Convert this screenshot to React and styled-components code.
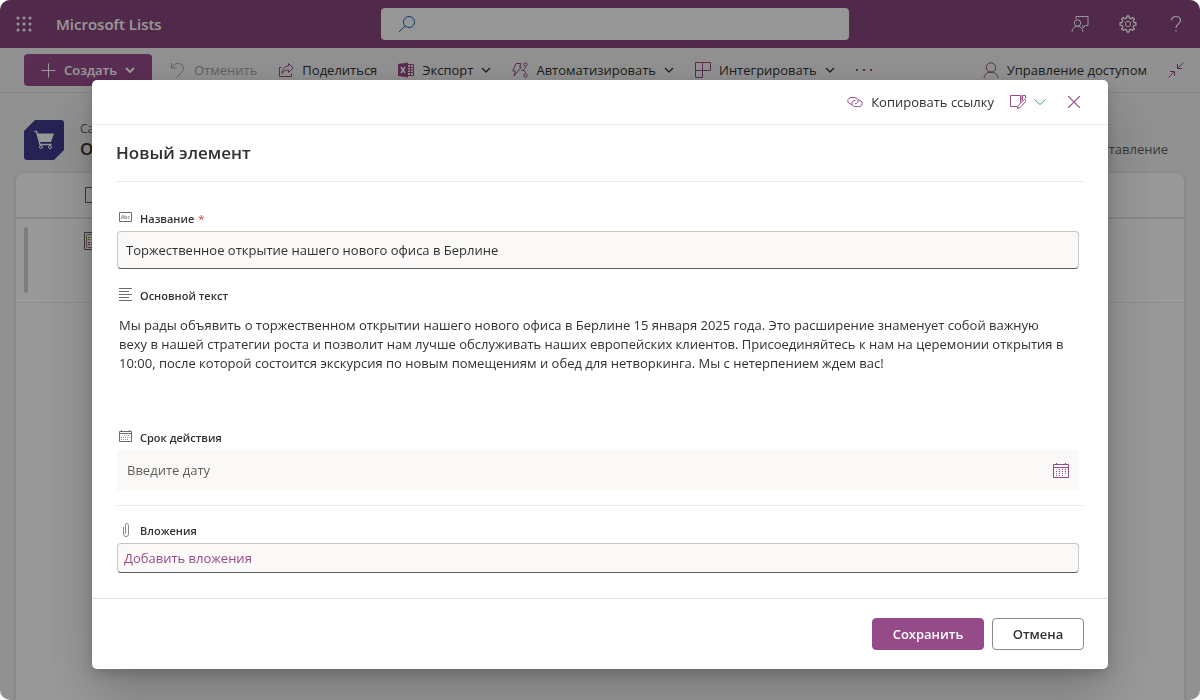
import React, { useState } from 'react';
import styled, { createGlobalStyle, css } from 'styled-components';

const purple = '#964b89';
const ink = '#323130';

const GlobalStyle = createGlobalStyle`
  * {
    box-sizing: border-box;
  }

  body {
    margin: 0;
    background: #fff;
    color: ${ink};
    font-family: 'Open Sans', 'Noto Sans', sans-serif;
    font-size: 13px;
  }

  button, input, textarea {
    font: inherit;
    color: inherit;
  }

  svg {
    display: block;
    flex: none;
    fill: none;
    stroke: currentColor;
  }
`;

const Page = styled.div`
  display: flex;
  flex-direction: column;
  min-height: 100vh;
  overflow: hidden;
  border-radius: 10px;
  background: #f2f2f2;
`;

const Header = styled.header`
  display: grid;
  grid-template-columns: 381fr 468fr 351fr;
  align-items: center;
  height: 48px;
  background: #87457c;
  color: #fff;
`;

const Brand = styled.div`
  display: flex;
  align-items: center;
  gap: 8px;
  font-size: 15px;
  font-weight: 600;
`;

const HeaderButton = styled.button`
  display: flex;
  align-items: center;
  justify-content: center;
  width: 48px;
  height: 48px;
  padding: 0;
  border: 0;
  background: none;
`;

const HeaderActions = styled.div`
  display: flex;
  justify-content: flex-end;
`;

const SearchBox = styled.label`
  display: flex;
  align-items: center;
  gap: 12px;
  height: 32px;
  padding: 0 17px;
  border-radius: 4px;
  background: #fafafa;
  color: #106ebe;
`;

const SearchInput = styled.input`
  flex: 1;
  min-width: 0;
  border: 0;
  outline: 0;
  background: none;
  color: ${ink};
`;

const CommandBar = styled.nav`
  display: flex;
  align-items: center;
  gap: 8px;
  height: 45px;
  padding: 0 16px 0 24px;
  border-bottom: 1px solid #e1dfdd;
`;

const CreateButton = styled.button`
  display: flex;
  align-items: center;
  gap: 8px;
  width: 128px;
  height: 32px;
  padding: 0 16px;
  border: 0;
  border-radius: 4px;
  background: ${purple};
  color: #fff;
  font-weight: 600;
`;

const Commands = styled.div`
  display: flex;
  flex: 1;
  gap: 1px;
`;

const Command = styled.button`
  display: flex;
  align-items: center;
  gap: 8px;
  height: 32px;
  padding: 0 10px;
  border: 0;
  background: none;
  white-space: nowrap;
  color: ${p => (p.disabled ? '#a19f9d' : ink)};

  svg:first-child {
    color: ${p => (p.disabled ? '#a19f9d' : purple)};
  }
`;

const CollapseButton = styled(Command)`
  padding: 0 0 0 3px;
`;

const ListHeading = styled.div`
  display: flex;
  align-items: center;
  gap: 16px;
  height: 80px;
  padding: 14px 32px 0 24px;
`;

const ListNames = styled.div`
  flex: 1;
`;

const SiteName = styled.div`
  font-size: 12px;
  line-height: 18px;
  color: #605e5c;
`;

const ListName = styled.h1`
  margin: 0;
  font-size: 17px;
  font-weight: 600;
  line-height: 22px;
`;

const ViewButton = styled.button`
  margin-top: 18px;
  padding: 0;
  border: 0;
  background: none;
  color: #605e5c;
`;

const ListPanel = styled.main`
  flex: 1;
  margin: 0 16px;
  border-radius: 8px 8px 0 0;
  background: #fff;
  box-shadow: 0 1px 4px rgba(0, 0, 0, 0.16);
`;

const ListHead = styled.div`
  display: flex;
  align-items: center;
  height: 46px;
  padding-left: 68px;
  border-bottom: 2px solid #e8e6e4;
`;

const ListItem = styled.div`
  display: flex;
  gap: 56px;
  height: 84px;
  padding: 8px;
  border-bottom: 1px solid #edebe9;
`;

const ItemMark = styled.div`
  width: 4px;
  height: 66px;
  border-radius: 2px;
  background: #d2d0ce;
`;

const ItemThumb = styled.div`
  padding-top: 5px;
`;

const Overlay = styled.div`
  position: fixed;
  inset: 0;
  display: flex;
  align-items: flex-start;
  justify-content: center;
  padding: 80px 92px 0;
  overflow: hidden;
  border-radius: 10px;
  background: rgba(0, 0, 0, 0.4);
`;

const Dialog = styled.form`
  flex: 1;
  border-radius: 5px;
  background: #fff;
  box-shadow: 0 26px 58px rgba(0, 0, 0, 0.22), 0 5px 14px rgba(0, 0, 0, 0.18);
`;

const DialogBar = styled.div`
  display: flex;
  align-items: center;
  justify-content: flex-end;
  height: 45px;
  padding: 0 28px;
  border-bottom: 1px solid #edebe9;
`;

const BarButton = styled.button`
  display: flex;
  align-items: center;
  gap: 8px;
  margin-left: ${p => (p.$spaced ? 22 : 16)}px;
  padding: 0;
  border: 0;
  background: none;

  svg {
    color: ${purple};
  }
`;

const DialogBody = styled.div`
  padding: 0 24px 25px;
`;

const DialogTitle = styled.h2`
  margin: 0;
  border-bottom: 1px solid #edebe9;
  font-size: 17px;
  font-weight: 600;
  line-height: 56px;
`;

const Fields = styled.div`
  display: flex;
  flex-direction: column;
  gap: 16px;
  padding: 26px 5px 15px 1px;
`;

const AttachmentArea = styled.div`
  padding: 14px 5px 0 1px;
  border-top: 1px solid #edebe9;
`;

const Field = styled.div`
  display: flex;
  flex-direction: column;
  gap: 3px;
`;

const FieldLabel = styled.label`
  display: flex;
  align-items: center;
  gap: 7px;
  height: 20px;
  padding-left: 2px;
  font-size: 11px;
  font-weight: 600;

  svg {
    color: #6e6c6a;
  }
`;

const Required = styled.span`
  margin-left: -3px;
  font-weight: 400;
  color: #d13438;
`;

const boxed = css`
  border: 1px solid #c8c6c4;
  border-bottom-color: #605e5c;
  border-radius: 4px;
  background: #faf9f8;
`;

const TextInput = styled.input`
  ${boxed}
  width: 100%;
  height: 38px;
  padding: 0 8px;
  outline: 0;
`;

const TextArea = styled.textarea`
  display: block;
  width: 100%;
  height: 103px;
  padding: 8px 10px 8px 2px;
  border: 0;
  outline: 0;
  resize: none;
  overflow: hidden;
  background: none;
  line-height: 19px;
`;

const DateBox = styled.div`
  display: flex;
  align-items: center;
  height: 40px;
  padding: 0 10px;
  background: #faf9f8;
`;

const DateInput = styled.input`
  flex: 1;
  min-width: 0;
  padding: 0;
  border: 0;
  outline: 0;
  background: none;

  &::placeholder {
    color: #605e5c;
    opacity: 1;
  }
`;

const IconButton = styled.button`
  padding: 0;
  border: 0;
  background: none;
  color: ${purple};
`;

const AttachButton = styled.button`
  ${boxed}
  width: 100%;
  height: 30px;
  padding: 0 6px;
  text-align: left;
  color: ${purple};
`;

const DialogFooter = styled.footer`
  display: flex;
  justify-content: flex-end;
  gap: 8px;
  padding: 19px 24px;
  border-top: 1px solid #e1dfdd;
`;

const FooterButton = styled.button`
  min-width: ${p => (p.$primary ? 112 : 92)}px;
  height: 32px;
  padding: 0 16px;
  border: 1px solid ${p => (p.$primary ? purple : '#8a8886')};
  border-radius: 4px;
  background: ${p => (p.$primary ? purple : '#fff')};
  color: ${p => (p.$primary ? '#fff' : ink)};
  font-weight: 600;
`;

const Svg = ({ w = 16, h = 16, children }) => (
  <svg width={w} height={h} viewBox={`0 0 ${w} ${h}`} aria-hidden="true">{children}</svg>
);

const WaffleIcon = () => (
  <Svg>
    <g fill="currentColor" stroke="none">
      {[2, 8, 14].map(y => [2, 8, 14].map(x => <circle key={`${x}-${y}`} cx={x} cy={y} r="1.5" />))}
    </g>
  </Svg>
);

const SearchIcon = () => (
  <Svg w={18} h={18}>
    <circle cx="11" cy="7" r="5.500" />
    <path d="M7 11 1 17" />
  </Svg>
);

const FeedbackIcon = () => (
  <Svg w={18} h={18}>
    <path d="M5 4V1.500h12v9h-2.500l-2.500 2.500v-2.500h-1" />
    <circle cx="6.500" cy="8" r="3.200" />
    <path d="M1 16.800c.3-3.300 2.300-5.500 5.500-5.500s5.200 2.200 5.500 5.500" />
  </Svg>
);

const GearIcon = () => (
  <Svg w={18} h={18}>
    <path
      strokeWidth="1.300"
      strokeLinejoin="round"
      d="M7.600 3.100 7.900 1h2.200l.3 2.100 1.700.7 1.700-1.300 1.600 1.600-1.200 1.700.7 1.700 2.100.3v2.300l-2.100.3-.7 1.700 1.200 1.700-1.600 1.600-1.700-1.200-1.700.7-.3 2.100H7.900l-.3-2.100-1.700-.7-1.700 1.200-1.600-1.600 1.200-1.700-.7-1.700L1 10.100V7.800l2.100-.3.7-1.700-1.200-1.700 1.600-1.600 1.700 1.300z"
    />
    <circle cx="9" cy="9" r="2.700" />
  </Svg>
);

const HelpIcon = () => (
  <Svg w={12} h={18}>
    <path strokeWidth="1.200" d="M1.500 5.500C1.500 3 3.300 1.500 6 1.500s4.500 1.500 4.500 4c0 3.200-4.500 3.700-4.500 7.500" />
    <path strokeWidth="1.200" d="M6 15v1.500" />
  </Svg>
);

const PlusIcon = () => <Svg><path d="M8.500 1.500v14M1.500 8.500h14" /></Svg>;

const Chevron = ({ bold }) => (
  <Svg w={10} h={10}>
    <path strokeWidth={bold ? 2 : 1.3} d="m1 3 4 4 4-4" />
  </Svg>
);

const UndoIcon = () => (
  <Svg><path d="M1.500 1v5h5M1.700 5.700C3 3 5.500 1.500 8 1.500c3 0 5.500 2 5.500 4.800 0 2-1 3.200-2.500 4.700L6.500 15.500" /></Svg>
);

const ShareIcon = () => (
  <Svg>
    <path d="M3.500 5.500h-2v9h12v-3" />
    <path d="M10.500 1.500 15.200 6l-4.700 4.500V8C7.500 8 5.500 9 4 11.500 4.300 7.500 6.500 4.300 10.500 4z" />
  </Svg>
);

const ExcelIcon = () => (
  <Svg>
    <path d="M9 2.500h6.500v11H9M9 5.500h6M9 8h6M9 10.500h6M12.500 3v10" />
    <path fill="currentColor" stroke="none" d="M0 2 10 .5v15L0 14z" />
    <path stroke="#fff" strokeWidth="1.500" d="m3 5 4 6M7 5l-4 6" />
  </Svg>
);

const FlowIcon = () => (
  <Svg>
    <path d="M4 1.500h5L7.500 5h2L2 14l1.500-5H.7z" />
    <circle cx="13.500" cy="2.500" r="1.700" />
    <circle cx="13.500" cy="13.500" r="1.700" />
    <path d="M11.500 8.500h-2M13.500 4.500v1L11.500 8l2 2.500v1" />
  </Svg>
);

const IntegrateIcon = () => (
  <Svg><path d="M.5.5h15v8H.5zM7.500.5v15h-7v-15" /></Svg>
);

const DotsIcon = () => (
  <Svg>
    <path fill="currentColor" stroke="none" d="M0 7h2v2H0zM7 7h2v2H7zM14 7h2v2h-2z" />
  </Svg>
);

const PersonIcon = () => (
  <Svg>
    <circle cx="8" cy="5.500" r="4.700" />
    <path d="M1 16c.3-3.500 3-5.800 7-5.800s6.700 2.300 7 5.800" />
  </Svg>
);

const CollapseIcon = () => (
  <Svg>
    <path d="M15.500.5 9.500 6.500M9.500 2v4.500H14M.5 15.500l6-6M2 9.500h4.500V14" />
  </Svg>
);

const SiteLogo = () => (
  <Svg w={40} h={40}>
    <path
      fill="#413a8c"
      stroke="none"
      d="M11 0h26a3 3 0 0 1 3 3v27L30 40H3a3 3 0 0 1-3-3V11z"
    />
    <path fill="#fff" stroke="none" d="M13 13.500h17l-3 8.500H16z" />
    <path stroke="#fff" strokeWidth="1.300" d="M10.500 11.500h2L16 24.500h11.500" />
    <circle cx="17" cy="27" r="1.500" stroke="#fff" />
    <circle cx="26" cy="27" r="1.500" stroke="#fff" />
  </Svg>
);

const PageIcon = () => <Svg><path stroke="#605e5c" d="M1.500.5h13v15h-13z" /></Svg>;

const ThumbIcon = () => (
  <Svg w={18} h={18}>
    <path stroke="#605e5c" d="M.5.5h17v17H.5z" />
    <rect x="2.500" y="2.500" width="13" height="13" rx="1" stroke="#8a8886" />
    <path stroke="#ca8b00" strokeDasharray="2 1" d="M4 5.500h10M4 7.500h10" />
    <path stroke="#d13438" strokeDasharray="2 1" d="M4 10.500h10M4 12.500h10" />
  </Svg>
);

const LinkIcon = () => (
  <Svg>
    <path d="M5 10.200C2.500 10.200.8 8.800.8 6.800S2.500 3.500 4.800 3.500h2.500c2.300 0 3.900 1.300 3.900 3.200S9.800 9.800 8 9.800" />
    <path d="M11.200 6.200c2.500 0 4 1.300 4 3.300s-1.600 3.200-3.800 3.200H9c-2.300 0-4-1.300-4-3.200s1.300-3.100 3.200-3.100" />
  </Svg>
);

const EditFormIcon = () => (
  <Svg>
    <path d="M7.500 12.500H.5v-11h10v7M15.500 4.500v-3h-3v5" />
    <path stroke="#6bb700" strokeOpacity=".6" d="M11.500 1v6" />
    <path fill="#fff" d="m7.500 14.500.8-3 5.700-5.700c1.200-.8 2.500.5 1.700 1.700L10.200 13.300z" />
  </Svg>
);

const ThinChevron = () => (
  <Svg w={12} h={12}><path stroke="#4a8fa8" d="m.5 3.500 5.500 5 5.500-5" /></Svg>
);

const CloseIcon = () => (
  <Svg w={12} h={12}><path strokeWidth="1.200" d="m0 0 12 12M12 0 0 12" /></Svg>
);

const AbcIcon = () => (
  <Svg w={14} h={14}>
    <path d="M.5 1.500h12v9H.5z" />
    <text x="2" y="8" fontSize="5" fontWeight="600" fill="currentColor" stroke="none">Abc</text>
  </Svg>
);

const LinesIcon = () => (
  <Svg w={14} h={14}>
    <path d="M0 .5h13M0 3.500h10M0 6.500h13M0 9.500h10M0 12.500h13" />
  </Svg>
);

const SmallCalendarIcon = () => (
  <Svg w={14} h={14}>
    <path d="M.5 1.500h12v10H.5zM.5 3.500h12M2.500 0v2M10.500 0v2" />
    <path strokeDasharray="1 1" strokeOpacity=".7" d="M5 5.500h6M2 7.500h9M2 9.500h7" />
  </Svg>
);

const ClipIcon = () => (
  <Svg w={14} h={14}>
    <path
      strokeOpacity=".8"
      d="M4.500 4v7c0 1.500 1 2.500 2.500 2.500s2.500-1 2.500-2.500V3c0-1.500-.8-2.500-2-2.500S6.500 1.500 6.500 3v8"
    />
  </Svg>
);

const CalendarIcon = () => (
  <Svg h={18}>
    <path d="M.5 3.500h15v13H.5zM.5 6.500h15M3.500 2v2M12.500 2v2" />
    <path strokeDasharray="1 2" d="M6 8.500h7M3 10.500h10M3 12.500h10M3 14.500h8" />
  </Svg>
);

const App = () => {
  const [title, setTitle] = useState('Торжественное открытие нашего нового офиса в Берлине');
  const [text, setText] = useState(
    'Мы рады объявить о торжественном открытии нашего нового офиса в Берлине 15 января 2025 года. ' +
    'Это расширение знаменует собой важную веху в нашей стратегии роста и позволит нам лучше обслуживать ' +
    'наших европейских клиентов. Присоединяйтесь к нам на церемонии открытия в 10:00, после которой ' +
    'состоится экскурсия по новым помещениям и обед для нетворкинга. Мы с нетерпением ждем вас!'
  );

  return (
    <>
      <GlobalStyle />
      <Page>
        <Header>
          <Brand>
            <HeaderButton aria-label="Приложения"><WaffleIcon /></HeaderButton>
            Microsoft Lists
          </Brand>
          <SearchBox>
            <SearchIcon />
            <SearchInput type="search" aria-label="Поиск" />
          </SearchBox>
          <HeaderActions>
            <HeaderButton aria-label="Отзыв"><FeedbackIcon /></HeaderButton>
            <HeaderButton aria-label="Параметры"><GearIcon /></HeaderButton>
            <HeaderButton aria-label="Справка"><HelpIcon /></HeaderButton>
          </HeaderActions>
        </Header>

        <CommandBar>
          <CreateButton><PlusIcon />Создать<Chevron bold /></CreateButton>
          <Commands>
            <Command disabled><UndoIcon />Отменить</Command>
            <Command><ShareIcon />Поделиться</Command>
            <Command><ExcelIcon />Экспорт<Chevron /></Command>
            <Command><FlowIcon />Автоматизировать<Chevron /></Command>
            <Command><IntegrateIcon />Интегрировать<Chevron /></Command>
            <Command aria-label="Ещё"><DotsIcon /></Command>
          </Commands>
          <Command><PersonIcon />Управление доступом</Command>
          <CollapseButton aria-label="Свернуть"><CollapseIcon /></CollapseButton>
        </CommandBar>

        <ListHeading>
          <SiteLogo />
          <ListNames>
            <SiteName>Сайт</SiteName>
            <ListName>Объявления</ListName>
          </ListNames>
          <ViewButton>Представление</ViewButton>
        </ListHeading>

        <ListPanel>
          <ListHead><PageIcon /></ListHead>
          <ListItem>
            <ItemMark />
            <ItemThumb><ThumbIcon /></ItemThumb>
          </ListItem>
        </ListPanel>
      </Page>

      <Overlay>
        <Dialog role="dialog" aria-labelledby="dialog-title" onSubmit={e => e.preventDefault()}>
          <DialogBar>
            <BarButton type="button"><LinkIcon />Копировать ссылку</BarButton>
            <BarButton type="button" aria-label="Изменить форму"><EditFormIcon /><ThinChevron /></BarButton>
            <BarButton type="button" $spaced aria-label="Закрыть"><CloseIcon /></BarButton>
          </DialogBar>

          <DialogBody>
            <DialogTitle id="dialog-title">Новый элемент</DialogTitle>
            <Fields>
              <Field>
                <FieldLabel htmlFor="title"><AbcIcon />Название<Required>*</Required></FieldLabel>
                <TextInput id="title" value={title} onChange={e => setTitle(e.target.value)} />
              </Field>
              <Field>
                <FieldLabel htmlFor="text"><LinesIcon />Основной текст</FieldLabel>
                <TextArea id="text" spellCheck={false} value={text} onChange={e => setText(e.target.value)} />
              </Field>
              <Field>
                <FieldLabel htmlFor="expires"><SmallCalendarIcon />Срок действия</FieldLabel>
                <DateBox>
                  <DateInput id="expires" placeholder="Введите дату" />
                  <IconButton type="button" aria-label="Выбрать дату"><CalendarIcon /></IconButton>
                </DateBox>
              </Field>
            </Fields>
            <AttachmentArea>
              <Field>
                <FieldLabel htmlFor="attach"><ClipIcon />Вложения</FieldLabel>
                <AttachButton id="attach" type="button">Добавить вложения</AttachButton>
              </Field>
            </AttachmentArea>
          </DialogBody>

          <DialogFooter>
            <FooterButton type="submit" $primary>Сохранить</FooterButton>
            <FooterButton type="button">Отмена</FooterButton>
          </DialogFooter>
        </Dialog>
      </Overlay>
    </>
  );
};

export default App;
